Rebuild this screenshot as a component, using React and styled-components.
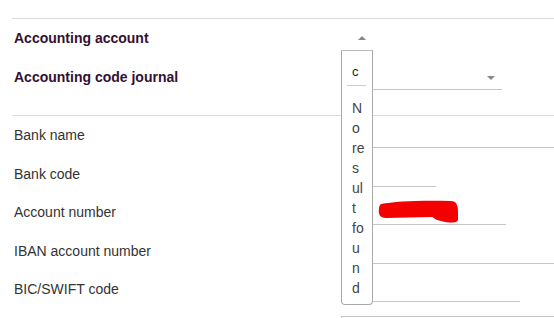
import styled, { createGlobalStyle } from "styled-components";

const GlobalStyle = createGlobalStyle`
  html, body {
    margin: 0;
    padding: 0;
    background: #fff;
    overflow: hidden;
  }
  body {
    font-family: "Liberation Sans", Arial, sans-serif;
    font-size: 14px;
    color: #333;
  }
`;

const Page = styled.div`
  width: 554px;
  height: 318px;
  padding: 18px 0 0 12px;
  box-sizing: border-box;
  overflow: hidden;
`;

const Section = styled.div`
  border-top: 1px solid #dcdcdc;
  margin-bottom: ${({ $gap }) => $gap || 0}px;
`;

const Row = styled.div`
  display: grid;
  grid-template-columns: 329px 1fr;
  height: 38.5px;
  align-items: ${({ $top }) => ($top ? "start" : "center")};
`;

const Label = styled.div`
  padding-left: 2px;
  font-weight: ${({ $bold }) => ($bold ? 700 : 400)};
  color: ${({ $bold }) => ($bold ? "#331033" : "#333")};
`;

const Field = styled.div`
  position: relative;
  height: 26px;
  width: ${({ $w }) => ($w ? `${$w}px` : "100%")};
  box-sizing: border-box;
  border-bottom: 1px solid ${({ $noLine }) => ($noLine ? "transparent" : "#c6c6c6")};
`;

const Arrow = styled.span`
  position: absolute;
  right: 7px;
  top: 50%;
  margin-top: -2px;
  width: 0;
  height: 0;
  border-left: 4px solid transparent;
  border-right: 4px solid transparent;
  ${({ $up }) =>
    $up
      ? "border-bottom: 4px solid #888;"
      : "border-top: 4px solid #888; margin-top: 0;"}
`;

const Dropdown = styled.div`
  position: absolute;
  left: 0;
  top: 100%;
  z-index: 5;
  width: 32px;
  box-sizing: border-box;
  background: #fff;
  border: 1px solid #aaa;
  border-top: 1px solid #bbb;
  border-radius: 0 0 4px 4px;
  padding-bottom: 6px;
`;

const Search = styled.div`
  padding: 7px 6px 0 5px;
`;

const SearchInput = styled.div`
  height: 28px;
  line-height: 28px;
  box-sizing: border-box;
  border-bottom: 1px solid #ccc;
  padding-left: 5px;
  font-size: 13px;
  color: #222;
`;

const Message = styled.div`
  padding: 12px 6px 0 10px;
  line-height: 20px;
  color: #444;
  overflow-wrap: anywhere;
`;

const Scribble = styled.svg`
  position: absolute;
  left: 36px;
  top: -1px;
`;

const Textarea = styled.div`
  margin-top: 7.5px;
  height: 60px;
  border: 1px solid #c6c6c6;
  border-right: none;
`;

const bankRows = [
  { label: "Bank name" },
  { label: "Bank code", w: 95 },
  { label: "Account number", w: 165, hidden: true },
  { label: "IBAN account number" },
  { label: "BIC/SWIFT code", w: 179 },
];

export default function App() {
  return (
    <>
      <GlobalStyle />
      <Page>
        <Section $gap={19}>
          <Row>
            <Label $bold>Accounting account</Label>
            <div>
              <Field $w={32} $noLine>
                <Arrow $up />
                <Dropdown>
                  <Search>
                    <SearchInput>c</SearchInput>
                  </Search>
                  <Message>No result found</Message>
                </Dropdown>
              </Field>
            </div>
          </Row>
          <Row>
            <Label $bold>Accounting code journal</Label>
            <div>
              <Field $w={161}>
                <Arrow />
              </Field>
            </div>
          </Row>
        </Section>
        <Section>
          {bankRows.map(({ label, w, hidden }) => (
            <Row key={label}>
              <Label>{label}</Label>
              <div>
                <Field $w={w}>
                  {hidden && (
                    <Scribble width="82" height="26" viewBox="0 0 82 26">
                      <path
                        d="M4 6 C 18 3, 48 2, 74 3 C 79 3, 81 7, 81 13 L 81 22 C 80 25, 75 25, 68 24 L 60 22 C 57 21, 57 19, 54 19 L 9 20 C 3 20, 1 16, 2 11 C 2 8, 3 7, 4 6 Z"
                        fill="#f40000"
                      />
                    </Scribble>
                  )}
                </Field>
              </div>
            </Row>
          ))}
          <Row $top>
            <Label />
            <Textarea />
          </Row>
        </Section>
      </Page>
    </>
  );
}
